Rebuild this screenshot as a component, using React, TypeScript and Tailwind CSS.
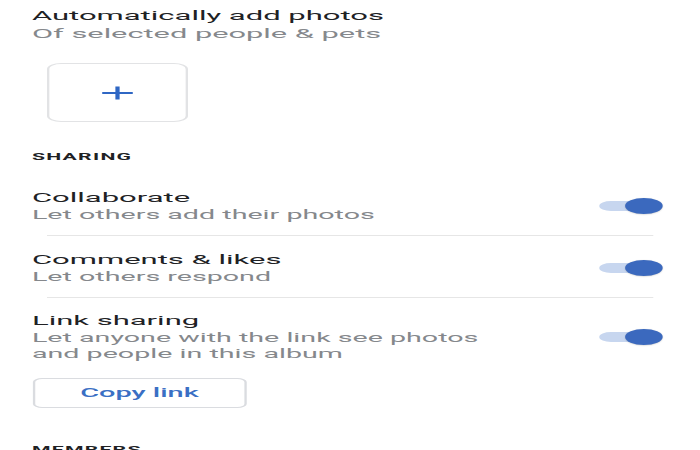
import React from "react";

function Toggle() {
  return (
    <div className="relative w-[27px] h-[16px] shrink-0">
      <div className="absolute left-0 top-[3px] w-[24px] h-[10px] rounded-full bg-[#c7d6ef]" />
      <div className="absolute right-0 top-0 w-[16px] h-[16px] rounded-full bg-[#3b69be] shadow-[0_0.5px_1px_rgba(0,0,0,0.2)]" />
    </div>
  );
}

function SettingRow({
  title,
  subtitle,
}: {
  title: string;
  subtitle: string;
}) {
  return (
    <div className="flex items-center pl-[13.6px] pr-[16px]">
      <div className="flex-1 flex flex-col">
        <div className="text-[13.2px] leading-[18px] text-[#202124]">{title}</div>
        <div className="text-[12.2px] leading-[16px] text-[#85888c] max-w-[200px]">
          {subtitle}
        </div>
      </div>
      <Toggle />
    </div>
  );
}

export default function App() {
  return (
    <div className="w-[700px] h-[450px] overflow-hidden bg-white">
      <div className="w-[298px] origin-top-left scale-x-[2.35] font-['Roboto',sans-serif] flex flex-col pt-[7px]">
        <div className="pl-[13.6px] flex flex-col">
          <div className="text-[13.2px] leading-[18px] text-[#202124]">
            Automatically add photos
          </div>
          <div className="text-[13.1px] leading-[17px] text-[#85888c]">
            Of selected people &amp; pets
          </div>
        </div>

        <div className="ml-[20px] mt-[21px] w-[60px] h-[59px] rounded-[6px] border border-[#e2e3e5] flex items-center justify-center">
          <svg width="14" height="14" viewBox="0 0 14 14">
            <path d="M7 0.5V13.5M0.5 7H13.5" stroke="#2f67c4" strokeWidth="1.8" fill="none" />
          </svg>
        </div>

        <div className="mt-[29px] pl-[13.6px] text-[9px] leading-[12px] font-bold tracking-[0.06em] text-[#202124]">
          SHARING
        </div>

        <div className="mt-[26px] flex flex-col">
          <SettingRow title="Collaborate" subtitle="Let others add their photos" />
          <div className="mx-[19.6px] mt-[12px] mb-[15px] h-px bg-[#e6e6e6]" />
          <SettingRow title="Comments & likes" subtitle="Let others respond" />
          <div className="mx-[19.6px] mt-[12px] mb-[14px] h-px bg-[#e6e6e6]" />
          <SettingRow
            title="Link sharing"
            subtitle="Let anyone with the link see photos and people in this album"
          />
        </div>

        <div className="pl-[13.6px] mt-[16px]">
          <button className="w-[91.5px] h-[30px] rounded-[4px] border border-[#dadce0] text-[12.3px] font-medium text-[#3a6fc4] flex items-center justify-center">
            Copy link
          </button>
        </div>

        <div className="mt-[36px] pl-[13.6px] text-[9px] leading-[12px] font-bold tracking-[0.06em] text-[#202124]">
          MEMBERS
        </div>
      </div>
    </div>
  );
}
